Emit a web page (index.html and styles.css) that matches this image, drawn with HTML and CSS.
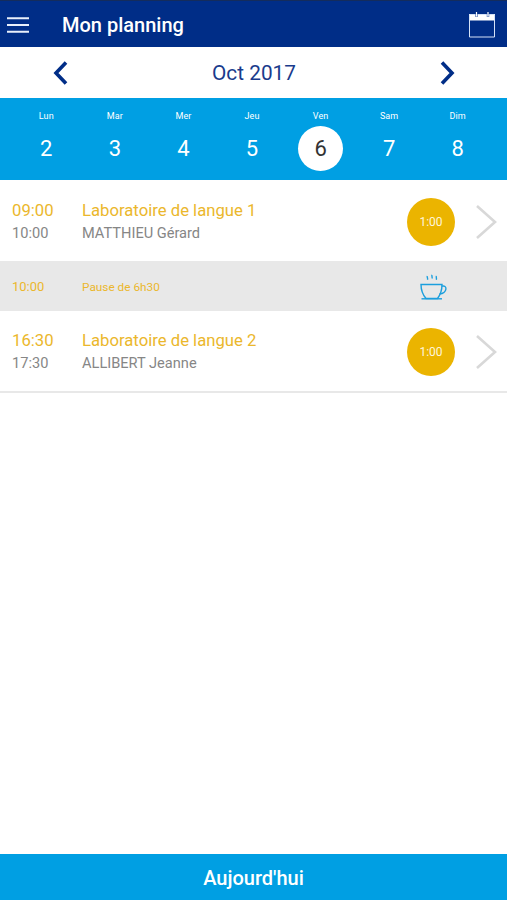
FILE: index.html
```html
<!DOCTYPE html>
<html lang="fr">
<head>
    <meta charset="UTF-8" />
    <meta name="viewport" content="width=device-width, initial-scale=1.0"/>
    <title>Mon planning</title>
    <link rel="stylesheet" href="styles.css">
</head>
<body>
    <header class="topbar">
        <svg class="menu-icon" width="22" height="16" viewBox="0 0 22 16">
            <path d="M0 1.3h22M0 8h22M0 14.7h22" />
        </svg>
        <h1>Mon planning</h1>
        <svg class="calendar-icon" width="28" height="28" viewBox="0 0 28 28">
            <path class="head" d="M1 3h26v6.500H1z" />
            <path class="frame" d="M1.500 3.500h25v22.500h-25z" />
            <path class="gap" d="M8.500 3v3M20 3v3" />
            <path class="ring" d="M8.500 1v4.500M20 1v4.500" />
        </svg>
    </header>

    <nav class="month-nav">
        <svg class="arrow" width="16" height="26" viewBox="0 0 16 26">
            <path d="M13 2.500L3 13l10 10.500" />
        </svg>
        <span class="month">Oct 2017</span>
        <svg class="arrow" width="16" height="26" viewBox="0 0 16 26">
            <path d="M3 2.500L13 13L3 23.500" />
        </svg>
    </nav>

    <div class="week">
        <div class="day"><span class="day-name">Lun</span><span class="day-number">2</span></div>
        <div class="day"><span class="day-name">Mar</span><span class="day-number">3</span></div>
        <div class="day"><span class="day-name">Mer</span><span class="day-number">4</span></div>
        <div class="day"><span class="day-name">Jeu</span><span class="day-number">5</span></div>
        <div class="day active"><span class="day-name">Ven</span><span class="day-number">6</span></div>
        <div class="day"><span class="day-name">Sam</span><span class="day-number">7</span></div>
        <div class="day"><span class="day-name">Dim</span><span class="day-number">8</span></div>
    </div>

    <main class="planning">
        <div class="course">
            <div class="hours">
                <p class="start">09:00</p>
                <p class="end">10:00</p>
            </div>
            <div class="details">
                <p class="title">Laboratoire de langue 1</p>
                <p class="teacher">MATTHIEU Gérard</p>
            </div>
            <span class="duration">1:00</span>
            <svg class="chevron" width="22" height="36" viewBox="0 0 22 36">
                <path d="M2 2l18 16L2 34" />
            </svg>
        </div>

        <div class="break">
            <span class="break-hour">10:00</span>
            <span class="break-label">Pause de 6h30</span>
            <svg class="cup" width="28" height="28" viewBox="0 0 28 28">
                <path d="M2 11.500h21c0 6-1.800 10.500-4.500 14H7C4 22 2 17.500 2 11.500z" />
                <path d="M22.800 13.200c2.700-.8 4.500.6 4.100 3-.5 3-2.900 4.600-6.400 4.800" />
                <path d="M2.500 25.800H23" />
                <path d="M8.300 3c-.6 1 .8 2 .2 3.700M13 1.800c-.6 1.100.6 2.200 0 3.700M17.500 3c-.8 1 .4 2-.2 3.700" />
            </svg>
        </div>

        <div class="course">
            <div class="hours">
                <p class="start">16:30</p>
                <p class="end">17:30</p>
            </div>
            <div class="details">
                <p class="title">Laboratoire de langue 2</p>
                <p class="teacher">ALLIBERT Jeanne</p>
            </div>
            <span class="duration">1:00</span>
            <svg class="chevron" width="22" height="36" viewBox="0 0 22 36">
                <path d="M2 2l18 16L2 34" />
            </svg>
        </div>
    </main>

    <button class="today" type="button">Aujourd'hui</button>
</body>
</html>
```
FILE: styles.css
```css
* {
    margin: 0;
    padding: 0;
    box-sizing: border-box;
    font-family: Roboto, sans-serif;
}

body {
    height: 100vh;
    display: flex;
    flex-direction: column;
    background: #ffffff;
}

svg {
    display: block;
    flex-shrink: 0;
    fill: none;
}

/* Top bar */
.topbar {
    height: 47px;
    padding: 1px 11px 0 7px;
    display: flex;
    align-items: center;
    background: #002d87;
    border-top: 1px solid #142c5c;
    color: #ffffff;
}

.topbar h1 {
    flex: 1;
    margin-left: 33px;
    font-size: 20px;
    font-weight: 500;
}

.menu-icon {
    stroke: #e8effb;
    stroke-width: 2;
}

.calendar-icon .head {
    fill: #ffffff;
}

.calendar-icon .frame {
    stroke: #d5e2f7;
    stroke-width: 1;
}

.calendar-icon .gap {
    stroke: #5474b4;
    stroke-width: 2.5;
}

.calendar-icon .ring {
    stroke: #ffffff;
    stroke-width: 1.2;
}

/* Month selector */
.month-nav {
    height: 51px;
    padding: 0 52px 0 53px;
    display: flex;
    align-items: center;
    justify-content: space-between;
    color: #1a3b8c;
}

.month {
    padding-top: 1px;
    font-size: 20.8px;
}

.arrow {
    stroke: #002d87;
    stroke-width: 3.6;
}

/* Week days */
.week {
    height: 82px;
    padding: 13px 15px 0 12px;
    display: grid;
    grid-template-columns: repeat(7, 1fr);
    background: #009fe3;
    color: #ffffff;
}

.day {
    display: flex;
    flex-direction: column;
    align-items: center;
}

.day-name {
    height: 15px;
    font-size: 9px;
    line-height: 11px;
    letter-spacing: 0.1px;
}

.day-number {
    width: 45px;
    height: 45px;
    border-radius: 50%;
    font-size: 22px;
    line-height: 45px;
    text-align: center;
}

.day.active .day-number {
    background: #ffffff;
    color: #333333;
}

/* Planning */
.planning {
    flex: 1;
}

.course {
    height: 81px;
    padding: 2px 10px 0 12px;
    display: flex;
    align-items: center;
}

.course:last-child {
    height: 82px;
    border-bottom: 2px solid #e8e8e8;
}

.hours {
    width: 70px;
}

.details {
    flex: 1;
}

.start,
.title {
    color: #ebb72c;
    font-size: 16.7px;
    line-height: 22px;
}

.end,
.teacher {
    color: #868686;
    font-size: 14.6px;
    line-height: 22px;
}

.duration {
    width: 48px;
    height: 48px;
    margin-right: 20px;
    border-radius: 50%;
    background: #ebb400;
    color: #fff6dc;
    font-size: 12px;
    line-height: 48px;
    text-align: center;
}

.chevron {
    stroke: #d8d8d8;
    stroke-width: 2.6;
}

.break {
    height: 50px;
    padding: 1px 60px 0 12px;
    display: flex;
    align-items: center;
    background: #e8e8e8;
    color: #ebb72c;
}

.break-hour {
    width: 70px;
    font-size: 13px;
}

.break-label {
    flex: 1;
    padding-top: 1px;
    font-size: 11.8px;
}

.cup {
    stroke: #1c9fdd;
    stroke-width: 1.4;
}

/* Footer button */
.today {
    height: 46px;
    padding-top: 2px;
    border: none;
    background: #009fe3;
    color: #ffffff;
    font-size: 20px;
    font-weight: 500;
}
```
